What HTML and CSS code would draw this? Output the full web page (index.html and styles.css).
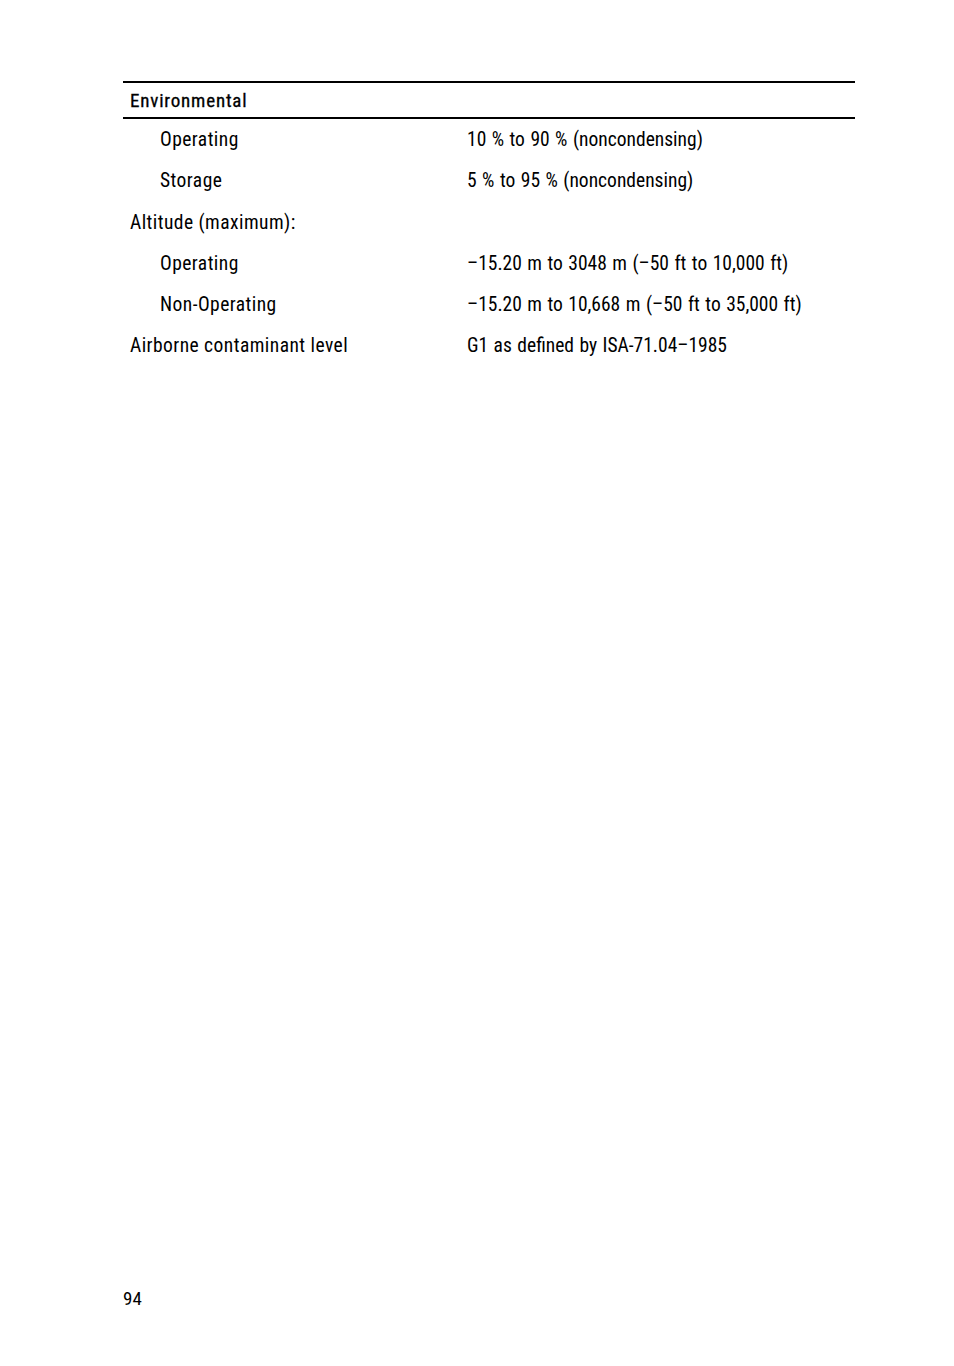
FILE: index.html
```html
<!DOCTYPE html>
<html>
<head>
<meta charset="utf-8">
<link rel="stylesheet" href="styles.css">
</head>
<body>
<div class="page">
  <div class="spec">
    <div class="head">Environmental</div>
    <div class="row"><div class="label sub">Operating</div><div class="value">10 % to 90 % (noncondensing)</div></div>
    <div class="row"><div class="label sub">Storage</div><div class="value">5 % to 95 % (noncondensing)</div></div>
    <div class="row"><div class="label">Altitude (maximum):</div><div class="value"></div></div>
    <div class="row"><div class="label sub">Operating</div><div class="value">–15.20 m to 3048 m (–50 ft to 10,000 ft)</div></div>
    <div class="row"><div class="label sub">Non-Operating</div><div class="value">–15.20 m to 10,668 m (–50 ft to 35,000 ft)</div></div>
    <div class="row"><div class="label">Airborne contaminant level</div><div class="value">G1 as defined by ISA-71.04–1985</div></div>
  </div>
  <div class="pagenum">94</div>
</div>
</body>
</html>
```
FILE: styles.css
```css
html, body {
  margin: 0;
  padding: 0;
  background: #fff;
}
body {
  font-family: "Roboto Condensed", "Liberation Sans Narrow", "DejaVu Sans Condensed", sans-serif;
  color: #000;
}
.page {
  width: 954px;
  height: 1366px;
  position: relative;
  padding: 81px 0 0 123px;
  box-sizing: border-box;
}
.spec {
  width: 732px;
}
.head {
  border-top: 2px solid #000;
  border-bottom: 2px solid #000;
  height: 38px;
  box-sizing: border-box;
  display: flex;
  align-items: center;
  padding-left: 7px;
  font-size: 19px;
  letter-spacing: 0.8px;
  -webkit-text-stroke: 0.3px #000;
}
.row {
  display: grid;
  grid-template-columns: 344px 1fr;
  height: 41.25px;
  align-items: center;
  font-size: 19.5px;
  letter-spacing: 0.45px;
}
.value {
  letter-spacing: 0;
  word-spacing: 1px;
}
.label {
  padding-left: 7px;
}
.label.sub {
  padding-left: 37px;
}
.pagenum {
  position: absolute;
  left: 123px;
  top: 1287px;
  font-size: 19px;
}
```
